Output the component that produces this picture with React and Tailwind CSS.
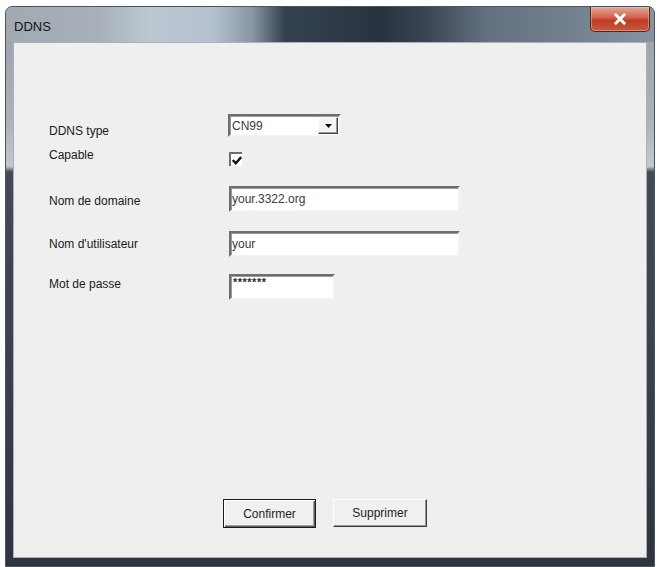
import React from "react";

const font = { fontFamily: '"Liberation Sans", Arial, sans-serif' };

function Sunken({ className = "", children }) {
  return (
    <div
      className={
        "bg-white border-2 border-t-[#6e6e6e] border-l-[#6e6e6e] border-r-[#f2f2f2] border-b-[#f2f2f2] shadow-[inset_1px_1px_0_#9a9a9a] " +
        className
      }
    >
      {children}
    </div>
  );
}

function Row({ h, labelTop, ctrlTop, label, children }) {
  return (
    <div className="flex items-start" style={{ height: h }}>
      <div className="w-[179px] text-[12px] leading-[14px] text-[#1a1a1a]" style={{ marginTop: labelTop }}>
        {label}
      </div>
      <div style={{ marginTop: ctrlTop }}>{children}</div>
    </div>
  );
}

export default function App() {
  return (
    <div className="w-[657px] h-[567px] bg-white overflow-hidden" style={font}>
      <div className="ml-[5px] mt-[6px] w-[650px] h-[561px] flex flex-col rounded-t-[7px] border border-[#4b5560] bg-[linear-gradient(to_bottom,#98a2ac_0%,#a9b1b9_20%,#c3c9cf_28.5%,#434b57_29.5%,#3a424d_60%,#2e353f_100%)]">
        {/* Title bar */}
        <div className="h-[35px] flex items-start justify-between rounded-t-[6px] bg-[linear-gradient(to_right,#a1a9b1_0%,#a7b0b9_14%,#bcc7d2_22%,#b4c1ce_32%,#8896a4_38%,#34424f_43%,#28333f_58%,#3a4653_65%,#637080_74%,#74828f_88%,#8693a0_100%)]">
          <div className="pl-[8px] pt-[12px] text-[13px] leading-[15px] text-[#141414]">DDNS</div>
          <div className="mr-[4px] w-[60px] h-[25px] rounded-b-[5px] border border-t-0 border-[#5b2318] bg-[linear-gradient(to_bottom,#e3a796_0%,#d3614a_45%,#c03a22_55%,#c65a40_100%)] shadow-[inset_0_0_0_1px_rgba(255,200,180,0.45)] flex items-center justify-center">
            <svg width="12" height="12" viewBox="0 0 12 12">
              <path d="M1.8 1.8 L10.2 10.2 M10.2 1.8 L1.8 10.2" stroke="#ffffff" strokeWidth="3" strokeLinecap="round" />
            </svg>
          </div>
        </div>
        {/* Client area */}
        <div className="mx-[7px] h-[516px] bg-[#efefef] border border-[#a8b0b8] flex flex-col">
          <div className="pl-[35px] pt-[71px] flex flex-col">
            <Row h={34} labelTop={10} ctrlTop={0} label="DDNS type">
              <Sunken className="w-[113px] h-[23px] flex items-center justify-between">
                <span className="pl-[2px] text-[12px] leading-[14px] text-[#3a3a3a]">CN99</span>
                <div className="mr-[1px] w-[20px] h-[17px] bg-[#f4f4f4] border border-t-white border-l-white border-r-[#404040] border-b-[#404040] shadow-[inset_-1px_-1px_0_#9a9a9a] flex items-center justify-center">
                  <svg width="7" height="4" viewBox="0 0 7 4">
                    <path d="M0 0 H7 L3.5 4 Z" fill="#111" />
                  </svg>
                </div>
              </Sunken>
            </Row>
            <Row h={38} labelTop={0} ctrlTop={4} label="Capable">
              <div className="ml-[1px] w-[13px] h-[14px] bg-white border-t-2 border-l-2 border-[#6e6e6e] flex items-end justify-center pb-[1px]">
                <svg width="10" height="9" viewBox="0 0 10 9">
                  <path d="M0.8 4 L3.8 7.2 L9.2 1" stroke="#111" strokeWidth="2.4" fill="none" />
                </svg>
              </div>
            </Row>
            <Row h={45} labelTop={8} ctrlTop={0} label="Nom de domaine">
              <Sunken className="ml-[1px] w-[231px] h-[26px] flex items-center">
                <span className="pl-[1px] text-[12px] leading-[14px] text-[#3a3a3a]">your.3322.org</span>
              </Sunken>
            </Row>
            <Row h={43} labelTop={6} ctrlTop={0} label="Nom d'utilisateur">
              <Sunken className="ml-[1px] w-[231px] h-[26px] flex items-center">
                <span className="pl-[1px] text-[12px] leading-[14px] text-[#3a3a3a]">your</span>
              </Sunken>
            </Row>
            <Row h={26} labelTop={3} ctrlTop={0} label="Mot de passe">
              <Sunken className="ml-[1px] w-[106px] h-[26px]">
                <span className="block pl-[2px] text-[11px] leading-[12px] tracking-[0.5px] font-bold text-[#2a2a2a]">*******</span>
              </Sunken>
            </Row>
          </div>
          <div className="mt-auto mb-[29px] pl-[209px] flex gap-[17px]">
            <button className="w-[93px] h-[29px] bg-[#f0f0f0] border border-[#1c1c1c] shadow-[inset_1px_1px_0_#ffffff,inset_-1px_-1px_0_#5a5a5a,inset_-2px_-2px_0_#a0a0a0] text-[12px] leading-[14px] text-[#1e1e1e]">
              Confirmer
            </button>
            <button className="w-[94px] h-[28px] bg-[#f0f0f0] border border-t-white border-l-white border-r-[#3a3a3a] border-b-[#3a3a3a] shadow-[inset_-1px_-1px_0_#9a9a9a] text-[12px] leading-[14px] text-[#1e1e1e]">
              Supprimer
            </button>
          </div>
        </div>
      </div>
    </div>
  );
}
